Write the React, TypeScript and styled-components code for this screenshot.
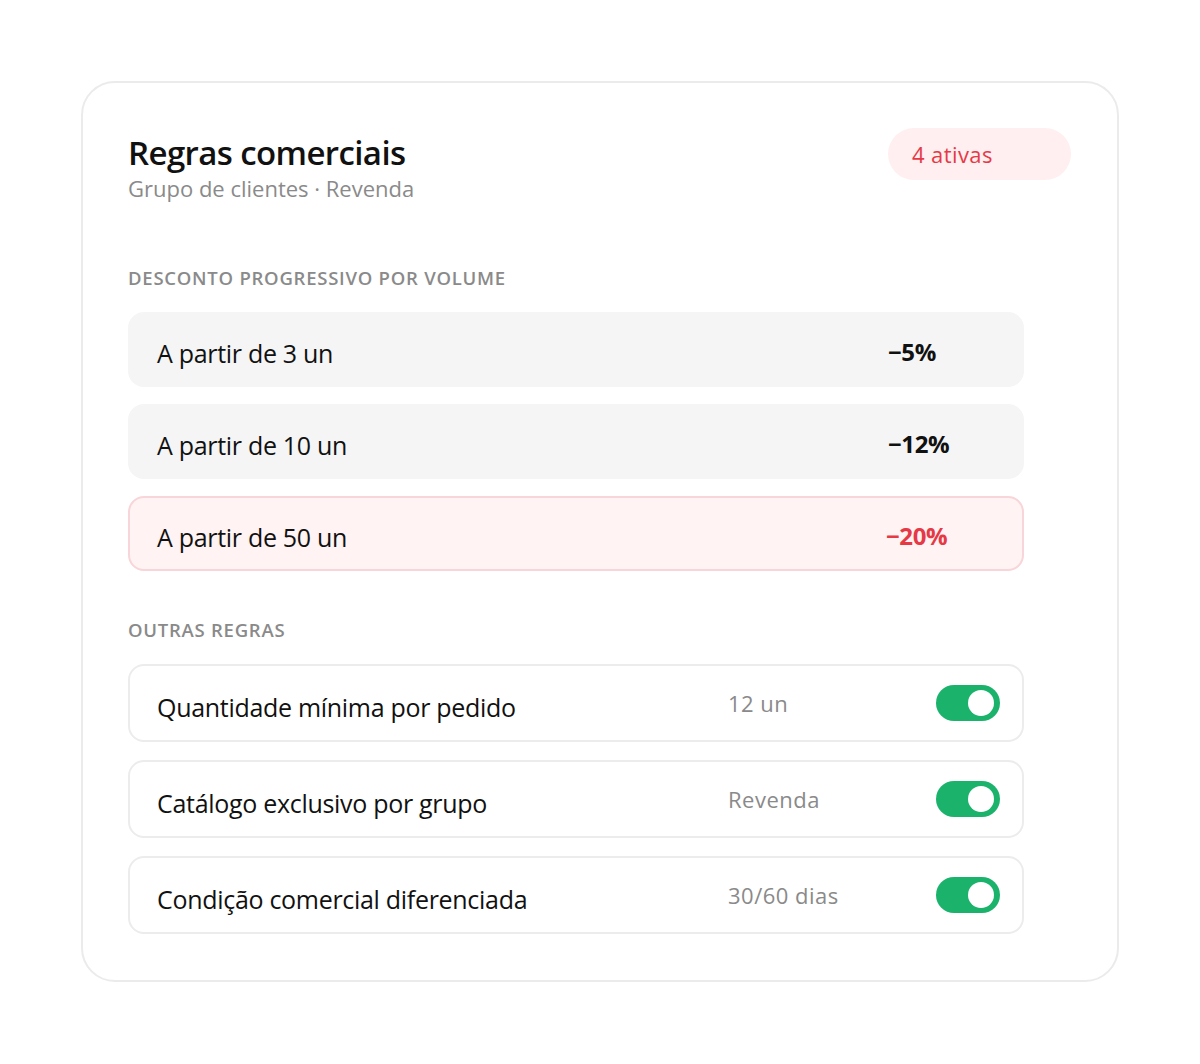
import React from "react";
import styled, { createGlobalStyle } from "styled-components";

const Global = createGlobalStyle`
  html, body { margin: 0; padding: 0; background: #ffffff; }
  body { font-family: "Open Sans", "Noto Sans", sans-serif; color: #111111; }
  * { box-sizing: border-box; }
`;

const Page = styled.div`
  padding: 81px 81px 82px 81px;
`;

const Card = styled.section`
  border: 2px solid #ebebeb;
  border-radius: 34px;
  padding: 48px 46px 46px 45px;
  height: 901px;
  display: flex;
  flex-direction: column;
`;

const Header = styled.header`
  display: flex;
  justify-content: space-between;
  align-items: flex-start;
`;

const TitleBlock = styled.div`
  display: flex;
  flex-direction: column;
`;

const Title = styled.h1`
  margin: 0;
  font-size: 33px;
  line-height: 44px;
  font-weight: 600;
  color: #111111;
  letter-spacing: -0.6px;
`;

const Subtitle = styled.p`
  margin: -1px 0 0;
  font-size: 22px;
  line-height: 28px;
  color: #8a8a8a;
`;

const Badge = styled.span`
  width: 183px;
  height: 52px;
  border-radius: 26px;
  background: #ffeff0;
  color: #e63946;
  font-size: 22px;
  font-weight: 500;
  letter-spacing: 0.4px;
  display: flex;
  align-items: center;
  padding-left: 24px;
  margin-top: -3px;
`;

const Section = styled.div<{ $top: number }>`
  margin-top: ${(p) => p.$top}px;
  display: flex;
  flex-direction: column;
`;

const SectionLabel = styled.h2`
  margin: 0 0 23px;
  font-size: 18.5px;
  line-height: 22px;
  font-weight: 600;
  color: #8a8a8a;
  letter-spacing: 0.75px;
`;

const List = styled.div<{ $gap: number }>`
  width: 896px;
  display: flex;
  flex-direction: column;
  gap: ${(p) => p.$gap}px;
`;

const TierRow = styled.div<{ $highlight?: boolean }>`
  height: 75px;
  border-radius: 16px;
  display: grid;
  grid-template-columns: 1fr 136px;
  align-items: center;
  background: ${(p) => (p.$highlight ? "#fff3f3" : "#f5f5f5")};
  border: ${(p) => (p.$highlight ? "2px solid #f8d5d8" : "none")};
  padding-left: ${(p) => (p.$highlight ? "27px" : "29px")};
`;

const RowLabel = styled.span`
  font-size: 25px;
  line-height: 30px;
  color: #111111;
  letter-spacing: -0.3px;
  margin-top: 7px;
`;

const TierValue = styled.span<{ $highlight?: boolean }>`
  font-size: 24px;
  line-height: 30px;
  font-weight: 700;
  color: ${(p) => (p.$highlight ? "#e63946" : "#111111")};
  margin-top: 5px;
  letter-spacing: -0.4px;
`;

const RuleRow = styled.div`
  height: 78px;
  border-radius: 16px;
  border: 2px solid #ececec;
  padding: 0 22px 0 27px;
  display: grid;
  grid-template-columns: 571px 1fr 64px;
  align-items: center;
`;

const RuleValue = styled.span`
  font-size: 22px;
  line-height: 28px;
  color: #8a8a8a;
  letter-spacing: 0.5px;
`;

const Toggle = styled.span<{ $on: boolean }>`
  width: 64px;
  height: 36px;
  border-radius: 18px;
  background: ${(p) => (p.$on ? "#1bb26b" : "#d9d9d9")};
  display: flex;
  align-items: center;
  justify-content: ${(p) => (p.$on ? "flex-end" : "flex-start")};
  padding: 0 6px;
`;

const Knob = styled.span`
  width: 26px;
  height: 26px;
  border-radius: 50%;
  background: #ffffff;
`;

const tiers = [
  { label: "A partir de 3 un", value: "−5%" },
  { label: "A partir de 10 un", value: "−12%" },
  { label: "A partir de 50 un", value: "−20%", highlight: true },
];

const rules = [
  { label: "Quantidade mínima por pedido", value: "12 un" },
  { label: "Catálogo exclusivo por grupo", value: "Revenda" },
  { label: "Condição comercial diferenciada", value: "30/60 dias" },
];

export default function App() {
  return (
    <>
      <Global />
      <Page>
        <Card>
          <Header>
            <TitleBlock>
              <Title>Regras comerciais</Title>
              <Subtitle>Grupo de clientes · Revenda</Subtitle>
            </TitleBlock>
            <Badge>4 ativas</Badge>
          </Header>

          <Section $top={65}>
            <SectionLabel>DESCONTO PROGRESSIVO POR VOLUME</SectionLabel>
            <List $gap={17}>
              {tiers.map((t) => (
                <TierRow key={t.label} $highlight={t.highlight}>
                  <RowLabel>{t.label}</RowLabel>
                  <TierValue $highlight={t.highlight}>{t.value}</TierValue>
                </TierRow>
              ))}
            </List>
          </Section>

          <Section $top={48}>
            <SectionLabel>OUTRAS REGRAS</SectionLabel>
            <List $gap={18}>
              {rules.map((r) => (
                <RuleRow key={r.label}>
                  <RowLabel>{r.label}</RowLabel>
                  <RuleValue>{r.value}</RuleValue>
                  <Toggle $on>
                    <Knob />
                  </Toggle>
                </RuleRow>
              ))}
            </List>
          </Section>
        </Card>
      </Page>
    </>
  );
}
